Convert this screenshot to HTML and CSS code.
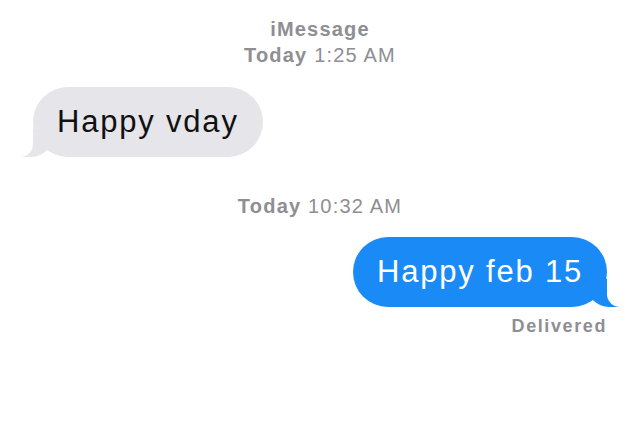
FILE: index.html
```html
<!DOCTYPE html>
<html lang="en">
<head>
  <meta charset="UTF-8" />
  <title>iMessage</title>
  <link rel="stylesheet" href="styles.css">
</head>
<body>
  <div class="thread">
    <div class="stamp">
      <div class="service">iMessage</div>
      <div><b>Today</b> 1:25 AM</div>
    </div>

    <div class="row left">
      <div class="bubble received">Happy vday</div>
    </div>

    <div class="stamp second">
      <div><b>Today</b> 10:32 AM</div>
    </div>

    <div class="row right">
      <div class="bubble sent">Happy feb 15</div>
    </div>
    <div class="status">Delivered</div>
  </div>
</body>
</html>
```

FILE: styles.css
```css
body {
  margin: 0;
  background: #fff;
  font-family: 'Liberation Sans', Arial, sans-serif;
}

.thread {
  display: flex;
  flex-direction: column;
  padding: 16px 33px 0 33px;
}

.stamp {
  text-align: center;
  font-size: 20px;
  line-height: 26px;
  letter-spacing: 1.2px;
  color: #8e8e93;
}

.stamp b, .service {
  font-weight: bold;
}

.stamp.second {
  margin-top: 36px;
}

.row {
  display: flex;
}

.row.left {
  margin-top: 19px;
  justify-content: flex-start;
}

.row.right {
  margin-top: 18px;
  justify-content: flex-end;
}

.bubble {
  position: relative;
  font-size: 31px;
  line-height: 36px;
  letter-spacing: 1.8px;
  padding: 17px 24px 17px 24px;
  border-radius: 35px;
}

.received {
  background: #e5e5ea;
  color: #111;
}

.received::before {
  content: "";
  position: absolute;
  bottom: 0;
  left: -12px;
  width: 32px;
  height: 28px;
  background: #e5e5ea;
  border-bottom-right-radius: 22px;
}

.received::after {
  content: "";
  position: absolute;
  bottom: 0;
  left: -18px;
  width: 18px;
  height: 28px;
  background: #fff;
  border-bottom-right-radius: 13px;
}

.sent {
  background: #1a8af6;
  color: #fff;
}

.sent::before {
  content: "";
  position: absolute;
  bottom: 0;
  right: -12px;
  width: 32px;
  height: 28px;
  background: #1a8af6;
  border-bottom-left-radius: 22px;
}

.sent::after {
  content: "";
  position: absolute;
  bottom: 0;
  right: -18px;
  width: 18px;
  height: 28px;
  background: #fff;
  border-bottom-left-radius: 13px;
}

.status {
  margin-top: 8px;
  text-align: right;
  font-size: 18px;
  line-height: 22px;
  letter-spacing: 1.6px;
  font-weight: bold;
  color: #8e8e93;
}
```
